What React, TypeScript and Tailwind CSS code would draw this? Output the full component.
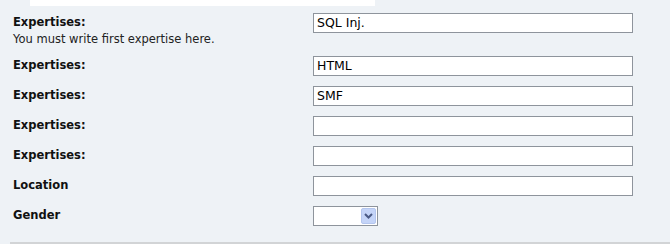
const font = { fontFamily: '"DejaVu Sans", Verdana, sans-serif' };

function TextInput({ value }: { value?: string }) {
  return (
    <div className="h-[20px] w-[320px] border border-[#8e949c] bg-white px-[3px] text-[12.5px] leading-[18px] text-black">
      {value}
    </div>
  );
}

function Row({ label, hint, children }: { label: string; hint?: string; children: React.ReactNode }) {
  return (
    <div className="flex items-start">
      <div className="w-[313px] pl-[13px] pt-[2px]">
        <div className="text-[11.5px] font-bold leading-[14px] text-[#111]">{label}</div>
        {hint && <div className="mt-[3px] text-[11.5px] leading-[14px] text-[#222]">{hint}</div>}
      </div>
      {children}
    </div>
  );
}

export default function App() {
  return (
    <div className="h-[244px] w-[670px] overflow-hidden bg-[#eef2f6]" style={font}>
      <div className="ml-[30px] h-[6px] w-[345px] bg-white" />
      <div className="mt-[7px] flex flex-col gap-[10px]">
        <div className="h-[33px]">
          <Row label="Expertises:" hint="You must write first expertise here.">
            <TextInput value="SQL Inj." />
          </Row>
        </div>
        <Row label="Expertises:">
          <TextInput value="HTML" />
        </Row>
        <Row label="Expertises:">
          <TextInput value="SMF" />
        </Row>
        <Row label="Expertises:">
          <TextInput />
        </Row>
        <Row label="Expertises:">
          <TextInput />
        </Row>
        <Row label="Location">
          <TextInput />
        </Row>
        <Row label="Gender">
          <div className="flex h-[20px] w-[65px] items-center justify-end border border-[#8e949c] bg-white pr-px">
            <div className="flex h-[16px] w-[15px] items-center justify-center rounded-[2px] border border-[#b4c6ee] bg-[#c4d4f8]">
              <svg width="9" height="6" viewBox="0 0 9 6">
                <path d="M1 1 L4.5 4.5 L8 1" fill="none" stroke="#4a5a85" strokeWidth="2" />
              </svg>
            </div>
          </div>
        </Row>
      </div>
      <div className="ml-[10px] mt-[16px] h-[2px] bg-[#d2d4d6]" />
    </div>
  );
}
